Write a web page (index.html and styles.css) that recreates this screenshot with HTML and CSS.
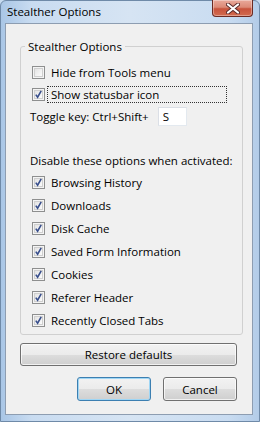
FILE: index.html
```html
<!DOCTYPE html>
<html lang="en">
<head>
    <meta charset="UTF-8">
    <title>Stealther Options</title>
    <link rel="stylesheet" href="styles.css">
</head>
<body>
    <div class="window">
        <!-- Title bar -->
        <div class="titlebar">
            <span class="title">Stealther Options</span>
            <button class="close-button">
                <svg width="14" height="11" viewBox="0 0 14 11">
                    <path d="M2 1.5 L12 9.5 M12 1.5 L2 9.5" stroke="#5a2a2a" stroke-width="4" stroke-linecap="round"/>
                    <path d="M2 1.5 L12 9.5 M12 1.5 L2 9.5" stroke="#ffffff" stroke-width="2.2" stroke-linecap="round"/>
                </svg>
            </button>
        </div>

        <!-- Client area -->
        <div class="client">
            <fieldset class="group">
                <legend class="group-title">Stealther Options</legend>

                <label class="row row-top">
                    <span class="check"></span>
                    <span>Hide from Tools menu</span>
                </label>
                <label class="row row-top focused">
                    <span class="check checked"></span>
                    <span>Show statusbar icon</span>
                </label>
                <div class="toggle-row">
                    <span>Toggle key: Ctrl+Shift+</span>
                    <input type="text" class="key-input" value="S" maxlength="1">
                </div>

                <div class="section-label">Disable these options when activated:</div>

                <label class="row"><span class="check checked"></span><span>Browsing History</span></label>
                <label class="row"><span class="check checked"></span><span>Downloads</span></label>
                <label class="row"><span class="check checked"></span><span>Disk Cache</span></label>
                <label class="row"><span class="check checked"></span><span>Saved Form Information</span></label>
                <label class="row"><span class="check checked"></span><span>Cookies</span></label>
                <label class="row"><span class="check checked"></span><span>Referer Header</span></label>
                <label class="row"><span class="check checked"></span><span>Recently Closed Tabs</span></label>
            </fieldset>

            <button class="btn restore-button">Restore defaults</button>

            <div class="dialog-buttons">
                <button class="btn default-button">OK</button>
                <button class="btn">Cancel</button>
            </div>
        </div>
    </div>
</body>
</html>
```

FILE: styles.css
```css
* {
    margin: 0;
    padding: 0;
    box-sizing: border-box;
    font-family: 'Open Sans', 'Noto Sans', sans-serif;
}

body {
    width: 260px;
    height: 422px;
    overflow: hidden;
    background-color: #c7dbf0;
}

.window {
    width: 260px;
    height: 422px;
    display: flex;
    flex-direction: column;
    background: linear-gradient(90deg, #a9c6e6 0%, #c9dcf1 12%, #d6e4f3 50%, #c9dcf1 88%, #b3cce8 100%);
    border: 1px solid #6f8aa8;
    border-radius: 6px 6px 0 0;
}

.titlebar {
    height: 22px;
    display: flex;
    justify-content: space-between;
    align-items: flex-start;
    padding-left: 6px;
    padding-right: 6px;
}

.title {
    font-size: 11.5px;
    line-height: 22px;
    color: #000;
}

.close-button {
    width: 41px;
    height: 17px;
    margin-top: -1px;
    border: 1px solid #6b2a22;
    border-top: none;
    border-radius: 0 0 4px 4px;
    background: linear-gradient(180deg, #e9a99b 0%, #dc8a77 45%, #c8533c 55%, #d26b4f 100%);
    box-shadow: inset 0 0 0 1px rgba(255, 255, 255, 0.35);
    display: flex;
    justify-content: center;
    align-items: center;
}

.client {
    flex: 1;
    margin: 0 6px 6px 4px;
    background-color: #f0f0f0;
    border: 1px solid #8d9db1;
    padding: 15px 15px 12px 14px;
    display: flex;
    flex-direction: column;
}

.group {
    border: 1px solid #d0d0d0;
    border-radius: 3px;
    padding: 7px 9px 0 9px;
    height: 296px;
}

.group-title {
    font-size: 11.5px;
    color: #000;
    margin-left: -5px;
    padding: 0 3px;
}

.row {
    display: flex;
    align-items: center;
    height: 23px;
    padding-left: 2px;
    font-size: 11.5px;
    color: #000;
    white-space: nowrap;
}

.row-top {
    height: 22px;
}

.row .check {
    margin-right: 6px;
}

.focused span:last-child {
    flex: 1;
    outline: 1px dotted #333;
    outline-offset: 0;
    line-height: 15px;
    margin-left: -3px;
    margin-right: 7px;
    padding-left: 3px;
}

.check {
    width: 13px;
    height: 13px;
    flex: none;
    border: 1px solid #8e8f8f;
    background: linear-gradient(135deg, #dcdcdc 0%, #f4f4f4 60%, #ffffff 100%);
    box-shadow: inset 0 0 0 1px #f4f4f4, inset 0 0 0 2px #cfcfcf;
    position: relative;
}

.checked::after {
    content: '';
    position: absolute;
    left: 2px;
    top: 1px;
    width: 7px;
    height: 9px;
    background: url("data:image/svg+xml;utf8,<svg xmlns='http://www.w3.org/2000/svg' width='7' height='9' viewBox='0 0 7 9'><path d='M0.8 4.6 L2.6 7.2 L6.2 0.8' fill='none' stroke='%23394f8c' stroke-width='1.6'/></svg>") no-repeat;
}

.toggle-row {
    display: flex;
    align-items: center;
    height: 22px;
    font-size: 11.5px;
    color: #000;
    white-space: nowrap;
}

.key-input {
    width: 29px;
    height: 19px;
    margin-left: 9px;
    border: 1px solid #abadb3;
    border-color: #dbdfe6 #e3e9ef #e3e9ef #dbdfe6;
    background-color: #fff;
    padding-left: 4px;
    font-size: 11.5px;
    color: #000;
    outline: none;
}

.section-label {
    margin-top: 23px;
    height: 21px;
    line-height: 21px;
    font-size: 11.5px;
    color: #000;
    white-space: nowrap;
}

.btn {
    height: 24px;
    font-size: 11.5px;
    color: #000;
    border: 1px solid #707070;
    border-radius: 3px;
    background: linear-gradient(180deg, #f2f2f2 0%, #ebebeb 50%, #dddddd 50%, #cfcfcf 100%);
    box-shadow: inset 0 0 0 1px rgba(255, 255, 255, 0.7);
}

.restore-button {
    margin-top: 8px;
    height: 23px;
    width: 100%;
}

.dialog-buttons {
    display: flex;
    justify-content: flex-end;
    gap: 12px;
    margin-top: 11px;
}

.dialog-buttons .btn {
    width: 74px;
}

.default-button {
    border-color: #3c7fb1;
    box-shadow: inset 0 0 0 1px #9fd6f5;
}
```
